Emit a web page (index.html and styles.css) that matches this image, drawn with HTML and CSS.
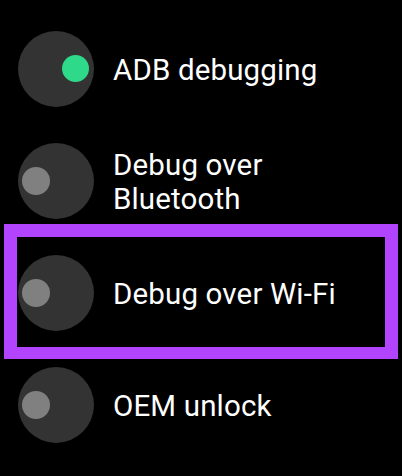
FILE: index.html
```html
<!DOCTYPE html>
<html>
<head>
<meta charset="utf-8">
<link rel="stylesheet" href="styles.css">
</head>
<body>
<div class="list">
  <div class="row">
    <div class="toggle"><span class="knob on"></span></div>
    <div class="label">ADB debugging</div>
  </div>
  <div class="row">
    <div class="toggle"><span class="knob"></span></div>
    <div class="label">Debug over<br>Bluetooth</div>
  </div>
  <div class="row highlighted">
    <div class="toggle"><span class="knob"></span></div>
    <div class="label">Debug over Wi-Fi</div>
    <div class="highlight"></div>
  </div>
  <div class="row">
    <div class="toggle"><span class="knob"></span></div>
    <div class="label">OEM unlock</div>
  </div>
</div>
</body>
</html>
```
FILE: styles.css
```css
html, body {
  margin: 0;
  padding: 0;
  background: #000;
}
body {
  width: 402px;
  height: 476px;
  overflow: hidden;
  font-family: Roboto, "Noto Sans", sans-serif;
  color: #fff;
}
.list {
  display: flex;
  flex-direction: column;
  padding-top: 13px;
}
.row {
  position: relative;
  height: 112px;
  display: flex;
  align-items: center;
  padding-left: 18px;
  gap: 19px;
}
.toggle {
  width: 76px;
  height: 76px;
  border-radius: 50%;
  background: #333333;
  position: relative;
  flex: none;
}
.knob {
  position: absolute;
  top: 24px;
  left: 4px;
  width: 28px;
  height: 28px;
  border-radius: 50%;
  background: #808080;
}
.knob.on {
  left: 44px;
  width: 27px;
  height: 27px;
  top: 24px;
  background: #2ed98a;
}
.label {
  font-size: 29.5px;
  line-height: 34px;
  letter-spacing: 0.15px;
  padding-top: 1px;
}
.highlight {
  position: absolute;
  left: 4px;
  right: 4px;
  top: -13px;
  bottom: -10px;
  border: 13px solid #b144fc;
  border-bottom-width: 12px;
  pointer-events: none;
}
```
